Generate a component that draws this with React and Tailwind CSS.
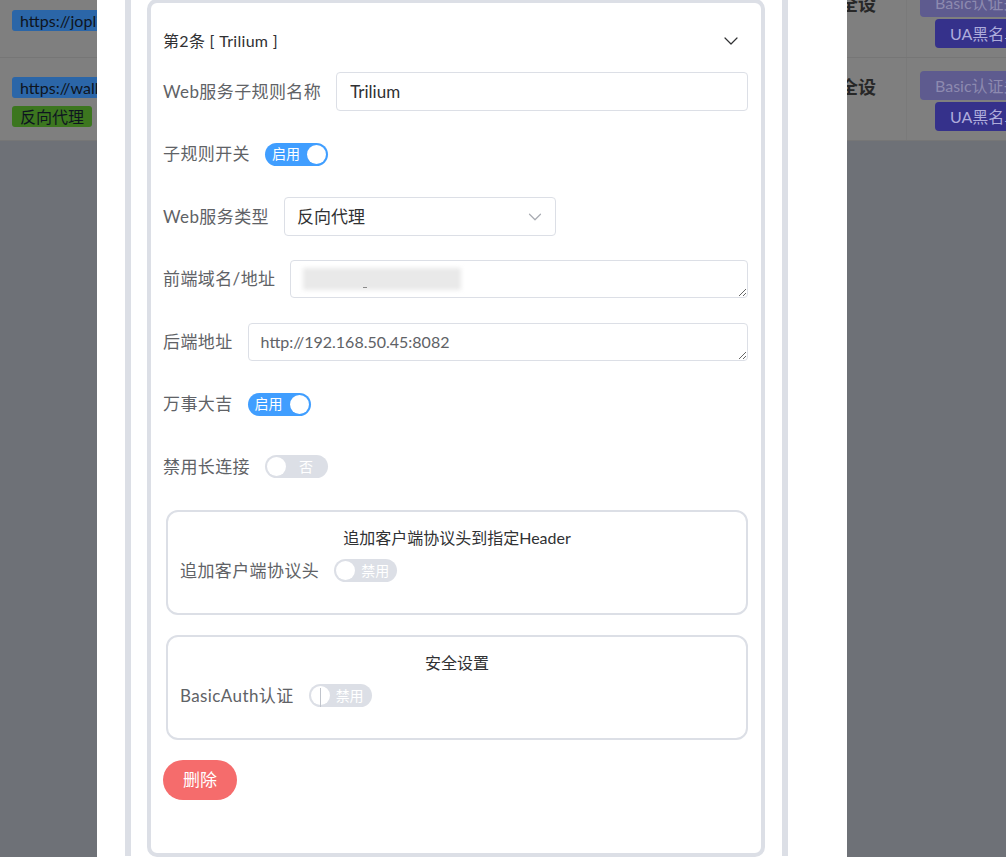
import React from 'react';
import { ChevronDown } from 'lucide-react';

// inline-prompt switch: text sits on the side opposite the knob
function Switch({ on, text, moving }) {
    if (on) {
        return (
            <div className="flex h-[23px] w-[63px] shrink-0 items-center justify-between rounded-full bg-[#409eff] pl-[7px] pr-[2px]">
                <span className="text-[14px] leading-none text-white">{text}</span>
                <span className="h-[19px] w-[19px] rounded-full bg-white" />
            </div>
        );
    }
    return (
        <div className="flex h-[23px] w-[63px] shrink-0 items-center rounded-full bg-[#dcdfe6] pl-[2px] pr-[2px]">
            <span className="relative h-[19px] w-[19px] rounded-full bg-white">
                {moving && <span className="absolute left-[9px] top-[2px] h-[19px] w-px bg-[#c0c4cc]" />}
            </span>
            <span className="flex-1 text-center text-[14px] leading-none text-white">{text}</span>
        </div>
    );
}

function FormRow({ label, children }) {
    return (
        <div className="flex h-[39px] items-center">
            <span className="mr-[15px] shrink-0 text-[17px] tracking-[0.4px] text-[#606266]">{label}</span>
            {children}
        </div>
    );
}

function Section({ title, label, text, moving }) {
    return (
        <div className="ml-[3px] h-[105px] rounded-[12px] border-2 border-[#dcdfe6] px-[12px] pt-[15px]">
            <div className="h-[22px] text-center text-[16px] leading-[22px] text-[#303133]">{title}</div>
            <div className="mt-[9px] flex h-[26px] items-center">
                <span className="mr-[15px] text-[17px] tracking-[0.4px] text-[#606266]">{label}</span>
                <Switch on={false} text={text} moving={moving} />
            </div>
        </div>
    );
}

function Tag({ color, children }) {
    return (
        <span className={`h-[21px] self-start whitespace-nowrap rounded-[3px] px-[8px] text-[16px] leading-[21px] text-[#0e1420] ${color}`}>
            {children}
        </span>
    );
}

function PageRow({ tags, top }) {
    return (
        <div className="flex h-[83px] w-[1006px] border-b border-[#767676] bg-[#7f7f7f]">
            <div className={`flex w-[800px] shrink-0 flex-col justify-center gap-[8px] pl-[12px] ${top}`}>
                {tags}
            </div>
            <div className="flex w-[106px] shrink-0 items-center pl-[22px]">
                <span className="w-[54px] text-[18px] font-bold leading-[24px] text-[#272727]">安全设置</span>
            </div>
            <div className="flex min-w-0 flex-1 flex-col justify-center gap-[2px] overflow-hidden border-l border-[#7a7a7a] pl-[13px] pt-[3px]">
                <span className="h-[29px] self-start whitespace-nowrap rounded-[4px] bg-[#5e5b8f] px-[15px] text-[16px] leading-[29px] text-[#8d8ab0]">
                    Basic认证关闭
                </span>
                <span className="ml-[15px] h-[29px] self-start whitespace-nowrap rounded-[4px] bg-[#35318b] px-[15px] text-[16px] leading-[29px] text-[#aeacdb]">
                    UA黑名单关闭
                </span>
            </div>
        </div>
    );
}

export default function App() {
    return (
        <div className="relative h-[857px] w-[1006px] overflow-hidden bg-[#6e7177] font-[Lato,'Noto_Sans_CJK_SC',sans-serif]">
            {/* Underlying rule table, dimmed */}
            <div className="-mt-[25px]">
                <PageRow
                    top="pt-[8px]"
                    tags={<Tag color="bg-[#2b66a8]">https://joplin.example.com</Tag>}
                />
                <PageRow
                    top="pt-[5px]"
                    tags={
                        <>
                            <Tag color="bg-[#2b66a8]">https://wallabag.example.com</Tag>
                            <Tag color="bg-[#3c761f]">反向代理</Tag>
                        </>
                    }
                />
            </div>

            {/* Edit dialog */}
            <div className="absolute inset-0 flex">
                <div className="ml-[97px] h-full w-[750px] bg-white pl-[28px]">
                    <div className="h-full w-[663px] border-x-[6px] border-[#dcdfe6] pl-[16px]">
                        <div className="-mt-px h-[858px] w-[618px] rounded-[10px] border-4 border-[#dcdfe6] pl-[12px] pr-[13px]">
                            {/* Collapse header */}
                            <div className="flex h-[69px] items-center justify-between pt-[7px]">
                                <span className="text-[16px] tracking-[0.3px] text-[#303133]">第2条 [ Trilium ]</span>
                                <ChevronDown size={24} strokeWidth={1.2} className="mr-[5px] text-[#303133]" />
                            </div>

                            <div className="flex flex-col gap-[23.5px]">
                                <FormRow label="Web服务子规则名称">
                                    <div className="flex h-[39px] flex-1 items-center rounded-[4px] border border-[#dcdfe6] pl-[13px] text-[17px] text-[#303133]">
                                        Trilium
                                    </div>
                                </FormRow>
                                <FormRow label="子规则开关">
                                    <Switch on text="启用" />
                                </FormRow>
                                <FormRow label="Web服务类型">
                                    <div className="flex h-[39px] w-[272px] items-center justify-between rounded-[4px] border border-[#dcdfe6] pl-[12px] pr-[9px]">
                                        <span className="text-[17px] text-[#303133]">反向代理</span>
                                        <ChevronDown size={22} strokeWidth={1.3} className="text-[#a8abb2]" />
                                    </div>
                                </FormRow>
                                <FormRow label="前端域名/地址">
                                    <div className="relative h-[38px] flex-1">
                                        <textarea
                                            readOnly
                                            rows={1}
                                            defaultValue=""
                                            className="h-[38px] w-full rounded-[4px] border border-[#dcdfe6] px-[12px] pt-[6px] text-[16px] outline-none"
                                        />
                                        <div className="absolute left-[13px] top-[8px] h-[22px] w-[158px] bg-[#e9e9e9] blur-[2px]" />
                                        <div className="absolute left-[73px] top-[27px] h-px w-[4px] bg-[#8a8a8a]" />
                                    </div>
                                </FormRow>
                                <FormRow label="后端地址">
                                    <textarea
                                        readOnly
                                        rows={1}
                                        defaultValue="http://192.168.50.45:8082"
                                        className="h-[38px] flex-1 rounded-[4px] border border-[#dcdfe6] px-[12px] pt-[6px] text-[16px] leading-[24px] text-[#606266] outline-none"
                                    />
                                </FormRow>
                                <FormRow label="万事大吉">
                                    <Switch on text="启用" />
                                </FormRow>
                                <FormRow label="禁用长连接">
                                    <Switch on={false} text="否" />
                                </FormRow>
                            </div>

                            <div className="mt-[23.5px] flex flex-col gap-[20px]">
                                <Section title="追加客户端协议头到指定Header" label="追加客户端协议头" text="禁用" />
                                <Section title="安全设置" label="BasicAuth认证" text="禁用" moving />
                            </div>

                            <button className="mt-[20px] h-[40px] w-[74px] rounded-full bg-[#f56c6c] text-[17px] text-white">
                                删除
                            </button>
                        </div>
                    </div>
                </div>
            </div>
        </div>
    );
}
